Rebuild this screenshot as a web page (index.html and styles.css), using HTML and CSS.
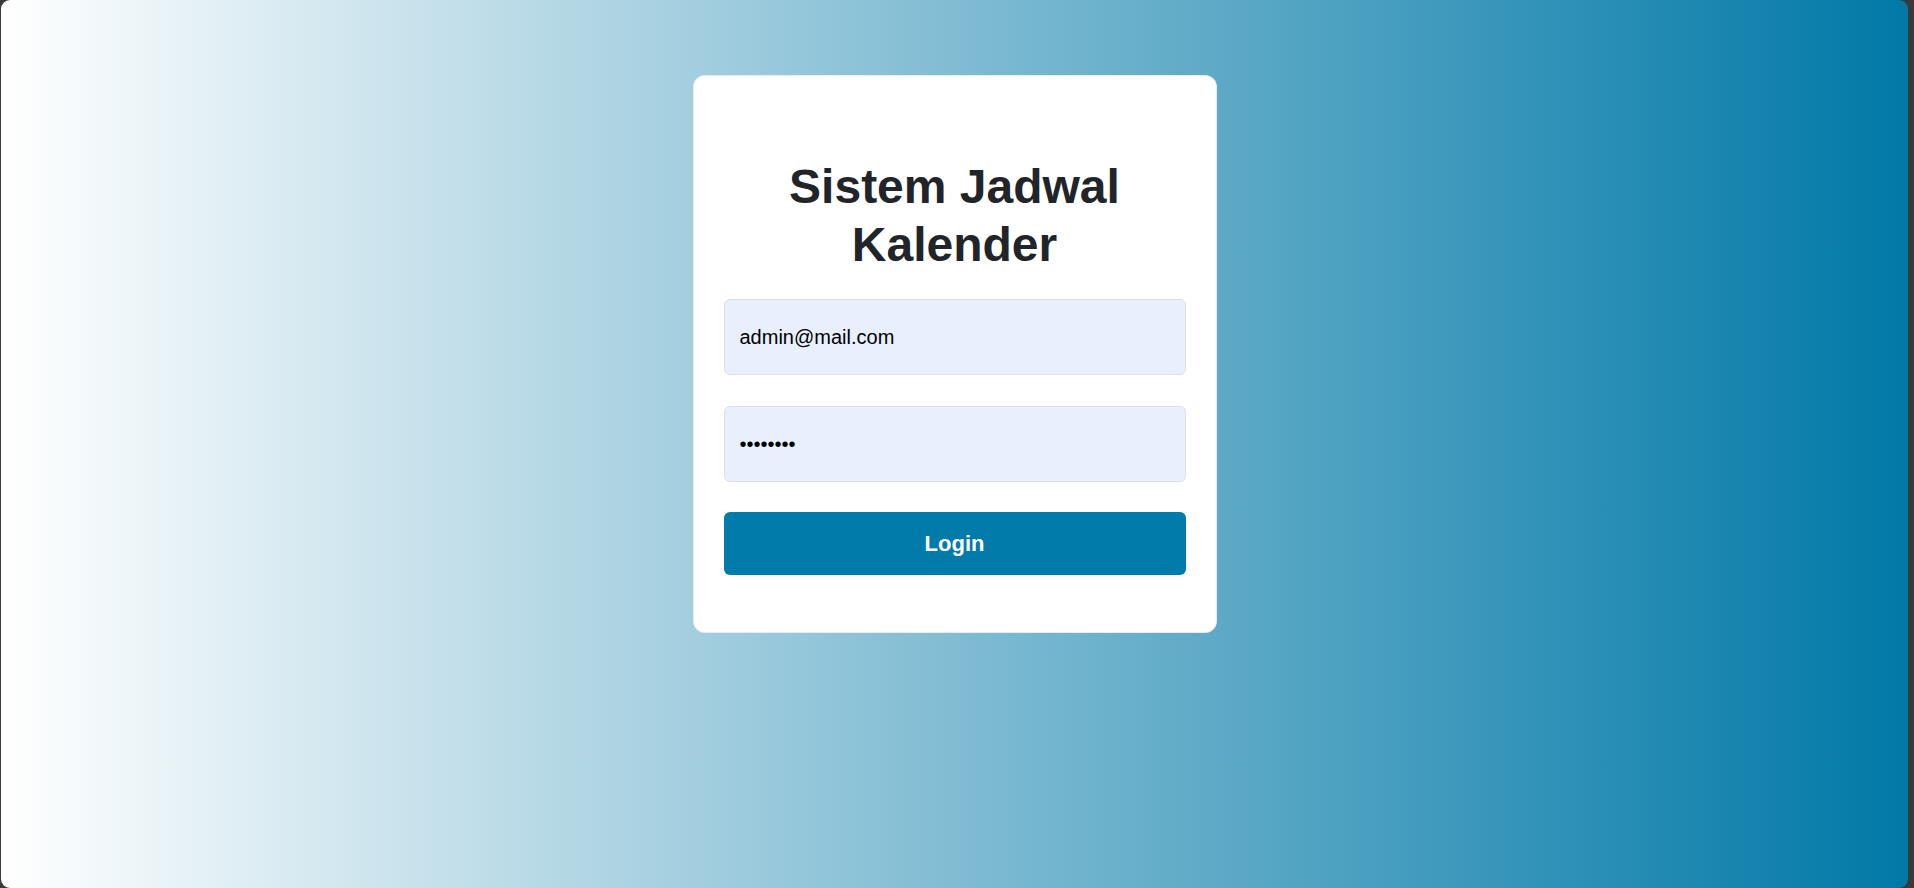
FILE: index.html
```html
<!DOCTYPE html>
<html lang="id">
<head>
<meta charset="utf-8">
<title>Sistem Jadwal Kalender</title>
<link rel="stylesheet" href="styles.css">
</head>
<body>
<div class="page">
  <main class="card">
    <h1 class="title">Sistem Jadwal Kalender</h1>
    <form class="form">
      <input class="field" type="email" value="admin@mail.com">
      <input class="field" type="password" value="12345678">
      <button class="btn" type="button">Login</button>
    </form>
  </main>
</div>
</body>
</html>
```

FILE: styles.css
```css
html, body {
  margin: 0;
  height: 100%;
}
body {
  background: #3a3a3a;
  padding: 0 6px 0 1px;
  box-sizing: border-box;
  font-family: "Liberation Sans", Arial, sans-serif;
}
.page {
  height: 888px;
  border-radius: 9px;
  background: linear-gradient(to right, #ffffff 0%, #0179a7 100%);
  display: flex;
  flex-direction: column;
  align-items: center;
  padding-top: 75px;
  box-sizing: border-box;
}
.card {
  width: 524px;
  box-sizing: border-box;
  background: #ffffff;
  border: 1px solid rgba(0, 0, 0, 0.08);
  border-radius: 12px;
  padding: 82px 30px 57px;
}
.title {
  margin: 0 0 26px;
  font-size: 48px;
  line-height: 1.2;
  font-weight: 700;
  color: #212529;
  text-align: center;
}
.form {
  display: flex;
  flex-direction: column;
  gap: 31px;
  margin: 0;
}
.field {
  height: 76px;
  box-sizing: border-box;
  border: 1px solid #dcdfe4;
  border-radius: 6px;
  background: #e8f0fe;
  padding: 0 15px;
  font-family: "Liberation Sans", Arial, sans-serif;
  font-size: 20px;
  color: #000000;
  outline: none;
}
.btn {
  height: 63px;
  margin-top: -1px;
  border: none;
  border-radius: 6px;
  background: #017ba9;
  color: #ffffff;
  font-family: "Liberation Sans", Arial, sans-serif;
  font-size: 22px;
  font-weight: 700;
  cursor: pointer;
}
```
